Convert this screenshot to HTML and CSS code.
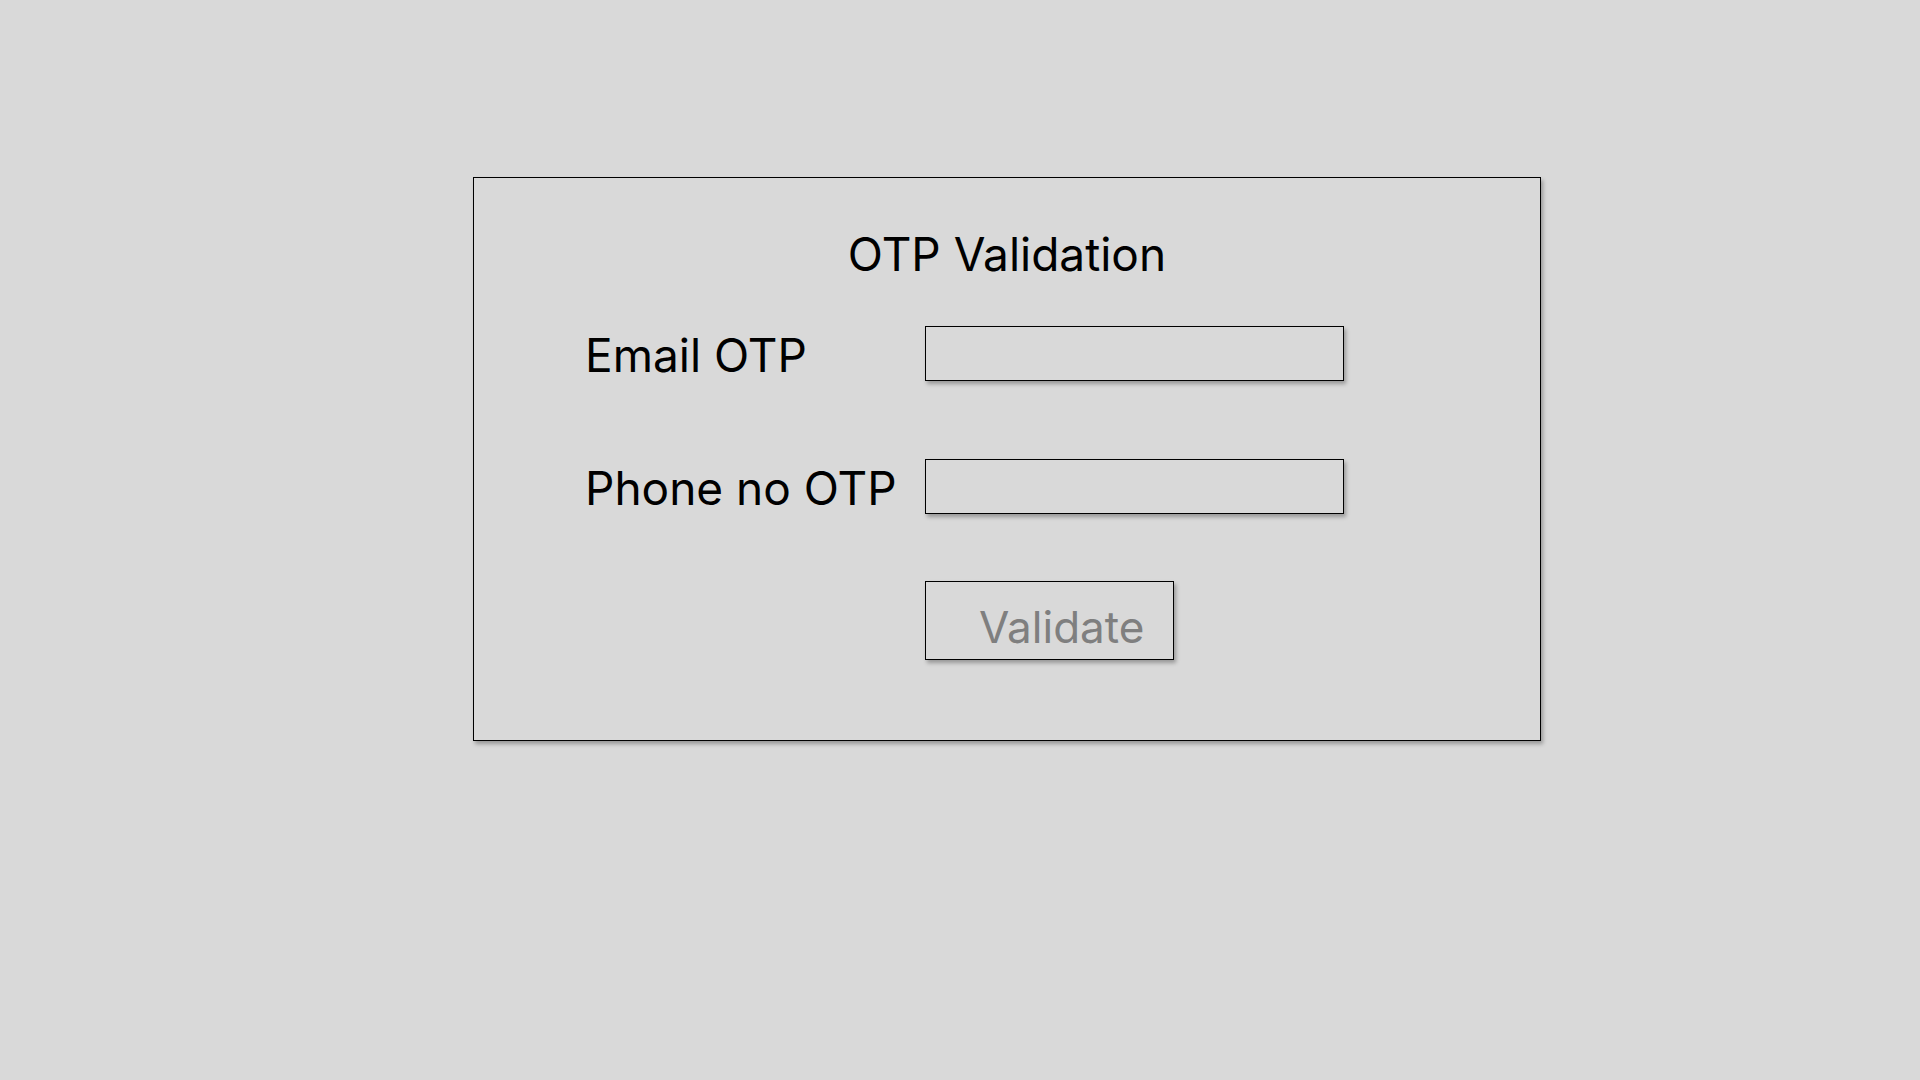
FILE: index.html
```html
<!DOCTYPE html>
<html lang="en">
<head>
<meta charset="utf-8">
<title>OTP Validation</title>
<link rel="stylesheet" href="styles.css">
</head>
<body>
  <main class="card">
    <h1 class="title">OTP Validation</h1>
    <form class="form">
      <label class="label" for="email-otp">Email OTP</label>
      <input class="field" id="email-otp" type="text">
      <label class="label" for="phone-otp">Phone no OTP</label>
      <input class="field" id="phone-otp" type="text">
      <button class="btn" type="button">Validate</button>
    </form>
  </main>
</body>
</html>
```

FILE: styles.css
```css
* { box-sizing: border-box; }
html, body { margin: 0; padding: 0; }
body {
  background: #d9d9d9;
  width: 1920px;
  height: 1080px;
  font-family: Inter, "Noto Sans", sans-serif;
  color: #000;
  padding: 177px 0 0 473px;
}
.card {
  width: 1068px;
  height: 564px;
  border: 1px solid #000;
  box-shadow: 2px 3px 4px rgba(0, 0, 0, 0.3);
  padding: 48px 0 0 111px;
}
.title {
  margin: 0 0 44px -111px;
  font-size: 46px;
  font-weight: 400;
  line-height: 56px;
  text-align: center;
}
.form {
  display: grid;
  grid-template-columns: 340px 419px;
  grid-auto-rows: 55px;
  row-gap: 78px;
  align-items: center;
}
.label {
  font-size: 46px;
  height: 55px;
  padding-top: 4px;
  line-height: 51px;
  white-space: nowrap;
}
.field {
  width: 419px;
  height: 55px;
  border: 1px solid #000;
  background: #d9d9d9;
  box-shadow: 2px 3px 4px rgba(0, 0, 0, 0.3);
  margin: 0;
  padding: 0 10px;
  font: inherit;
  font-size: 30px;
}
.btn {
  grid-column: 2;
  margin-top: -11px;
  align-self: start;
  width: 249px;
  height: 79px;
  border: 1px solid #000;
  background: #d9d9d9;
  box-shadow: 2px 3px 4px rgba(0, 0, 0, 0.3);
  padding: 12px 0 0 53px;
  text-align: left;
  font-family: Inter, "Noto Sans", sans-serif;
  font-size: 44px;
  line-height: 54px;
  color: #7f7f7f;
  display: block;
}
```
